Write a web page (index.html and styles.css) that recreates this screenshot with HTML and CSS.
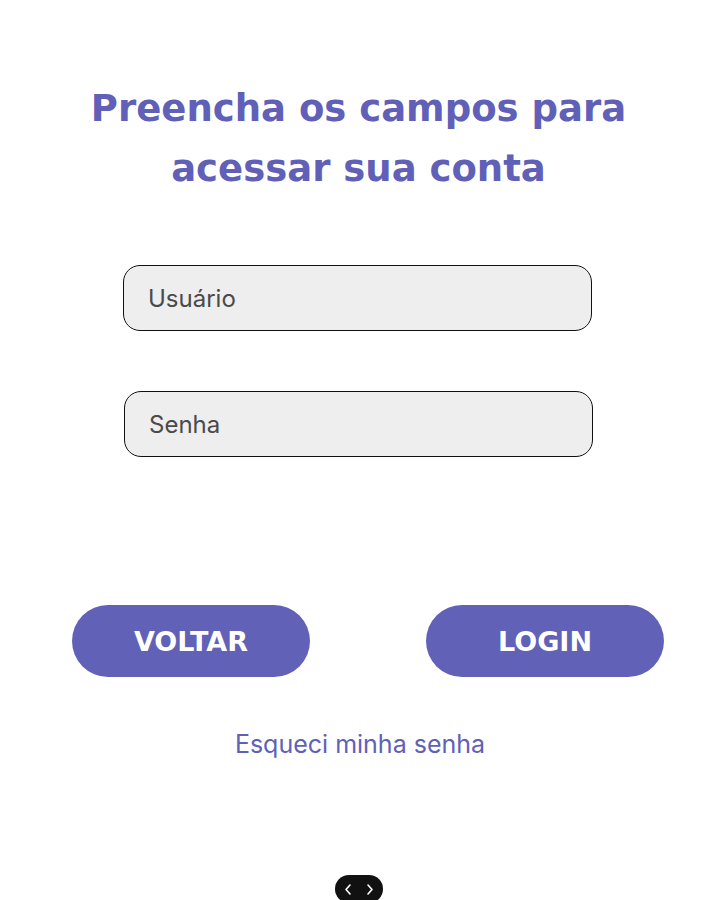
FILE: index.html
```html
<!DOCTYPE html>
<html lang="pt">
<head>
<meta charset="utf-8">
<link rel="stylesheet" href="styles.css">
</head>
<body>
<main class="page">
  <h1 class="title">Preencha os campos para<br>acessar sua conta</h1>
  <div class="fields">
    <div class="field field-user">Usuário</div>
    <div class="field field-pass">Senha</div>
  </div>
  <div class="actions">
    <button class="btn">VOLTAR</button>
    <button class="btn">LOGIN</button>
  </div>
  <a class="forgot" href="#">Esqueci minha senha</a>
  <div class="nav-pill">
    <svg width="48" height="28" viewBox="0 0 48 28">
      <path d="M15 10 L11 14.5 L15 19" fill="none" stroke="#fff" stroke-width="1.6" stroke-linecap="round" stroke-linejoin="round"/>
      <path d="M33 10 L37 14.5 L33 19" fill="none" stroke="#fff" stroke-width="1.6" stroke-linecap="round" stroke-linejoin="round"/>
    </svg>
  </div>
</main>
</body>
</html>
```
FILE: styles.css
```css
html, body {
  margin: 0;
  padding: 0;
  background: #ffffff;
}
.page {
  width: 717px;
  height: 900px;
  overflow: hidden;
  display: flex;
  flex-direction: column;
  align-items: center;
}
.title {
  margin: 79px 0 0 0;
  font-family: "DejaVu Sans", sans-serif;
  font-weight: 700;
  font-size: 37px;
  line-height: 60px;
  color: #6060b8;
  text-align: center;
}
.fields {
  align-self: flex-start;
  margin-left: 123px;
  margin-top: 66px;
  display: flex;
  flex-direction: column;
  gap: 60px;
  width: 470px;
}
.field {
  box-sizing: border-box;
  height: 66px;
  width: 469px;
  background: #eeeeee;
  border: 1px solid #111;
  border-radius: 17px;
  padding-left: 24px;
  display: flex;
  align-items: center;
  font-family: "Inter", sans-serif;
  font-size: 24px;
  color: #4a4a4a;
}
.field-pass {
  margin-left: 1px;
}
.actions {
  align-self: flex-start;
  margin-left: 72px;
  margin-top: 148px;
  width: 592px;
  display: flex;
  justify-content: space-between;
}
.btn {
  width: 238px;
  height: 72px;
  border: none;
  border-radius: 36px;
  background: #6161b8;
  color: #ffffff;
  font-family: "DejaVu Sans", sans-serif;
  font-weight: 700;
  font-size: 27px;
  padding: 0;
}
.forgot {
  margin-top: 52px;
  font-family: "Inter", sans-serif;
  font-size: 25px;
  color: #6060b8;
  text-decoration: none;
  margin-left: 3px;
}
.nav-pill {
  margin-top: 116px;
  margin-left: 1px;
  width: 48px;
  height: 28px;
  border-radius: 14px;
  background: #111111;
  display: flex;
  align-items: flex-start;
}
```
